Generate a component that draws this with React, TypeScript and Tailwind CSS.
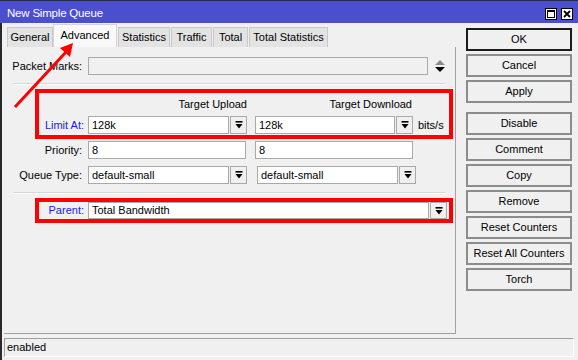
import React from "react";

const DropIcon = () => (
  <svg width="8" height="8" viewBox="0 0 8 8">
    <rect x="0.5" y="0" width="7" height="1.6" fill="#000" />
    <polygon points="0.5,3 7.5,3 4,7.5" fill="#000" />
  </svg>
);

const DropBtn = ({ className = "" }: { className?: string }) => (
  <div className={`h-full w-[17px] border border-[#a9a9a9] bg-[#f0f0f0] flex items-center justify-center ${className}`}>
    <DropIcon />
  </div>
);

const Field = ({ value, className = "", disabled = false }: { value?: string; className?: string; disabled?: boolean }) => (
  <div
    className={`h-full border border-[#a9a9a9] flex items-center pl-[3px] leading-none ${disabled ? "bg-[#f0f0f0]" : "bg-white"} ${className}`}
  >
    {value}
  </div>
);

const Btn = ({ label, ok = false, className = "" }: { label: string; ok?: boolean; className?: string }) => (
  <div
    className={`h-[23px] w-[106px] flex items-center justify-center bg-[#f0f0f0] border-2 ${ok ? "border-[#1a1a1a]" : "border-[#8c8c8c]"} ${className}`}
  >
    {label}
  </div>
);

export default function App() {
  return (
    <div
      className="relative w-[578px] h-[360px] overflow-hidden bg-[#f0f0f0] text-[11px] text-black flex flex-col"
      style={{ fontFamily: '"Liberation Sans", Arial, sans-serif' }}
    >
      {/* Title bar */}
      <div className="h-[23px] shrink-0 bg-[#4b4fce] border-t border-[#2a2a55] flex items-start">
        <div className="pl-[7px] pt-[7px] text-white text-[11.5px] leading-none tracking-[-0.2px]">New Simple Queue</div>
        <div className="ml-auto mr-[5px] mt-[7px] flex gap-[4px]">
          <div className="w-[12px] h-[12px] bg-white border border-black flex items-center justify-center">
            <div className="w-[8px] h-[8px] border border-black border-t-2" />
          </div>
          <div className="w-[12px] h-[12px] bg-white border border-black flex items-center justify-center">
            <svg width="8" height="8" viewBox="0 0 8 8">
              <path d="M1 1 L7 7 M7 1 L1 7" stroke="#000" strokeWidth="1.8" />
            </svg>
          </div>
        </div>
      </div>

      {/* Body */}
      <div className="flex-1 flex flex-col border-l-2 border-[#2a2a2a]">
        <div className="flex">
          {/* Left: tabs + panel */}
          <div className="ml-[2px] w-[452px] flex flex-col">
            <div className="h-[24px] flex items-end">
              <div className="ml-[3px] w-[46px] h-[20px] bg-[#e3e3e3] border border-[#c8c8c8] border-b-0 flex items-center justify-center">General</div>
              <div className="w-[64px] h-[23px] bg-[#f9f9f9] border border-[#d4d4d4] border-b-0 flex items-center justify-center pb-[2px]">Advanced</div>
              <div className="ml-[1px] w-[52px] h-[20px] bg-[#e3e3e3] border border-[#c8c8c8] border-b-0 flex items-center justify-center">Statistics</div>
              <div className="ml-[1px] w-[41px] h-[20px] bg-[#e3e3e3] border border-[#c8c8c8] border-b-0 flex items-center justify-center">Traffic</div>
              <div className="ml-[1px] w-[35px] h-[20px] bg-[#e3e3e3] border border-[#c8c8c8] border-b-0 flex items-center justify-center">Total</div>
              <div className="ml-[1px] w-[79px] h-[20px] bg-[#e3e3e3] border border-[#c8c8c8] border-b-0 flex items-center justify-center">Total Statistics</div>
            </div>

            {/* Panel */}
            <div className="h-[287px] border-r border-b border-[#a0a0a0] flex flex-col">
              {/* Packet Marks */}
              <div className="mt-[10px] h-[18px] flex items-center">
                <div className="w-[80px] text-right pr-[2px]">Packet Marks:</div>
                <Field disabled className="ml-[4px] w-[340px]" />
                <svg className="ml-[7px]" width="10" height="14" viewBox="0 0 10 14">
                  <polygon points="0,6 10,6 5,1" fill="#8a8a8a" />
                  <polygon points="0,8 10,8 5,13" fill="#000" />
                </svg>
              </div>

              <div className="mt-[8px] ml-[9px] w-[432px] h-[2px] border-t border-[#d6d6d6] border-b border-b-white" />

              {/* Red box 1 */}
              <div className="mt-[4px] ml-[31px] w-[418px] h-[50px] border-4 border-[#ff0000] flex flex-col">
                <div className="h-[23px] flex items-center">
                  <div className="w-[49px]" />
                  <div className="w-[159px] text-right">Target Upload</div>
                  <div className="ml-[8px] w-[157px] text-right">Target Download</div>
                </div>
                <div className="h-[18px] flex items-center">
                  <div className="w-[45px] text-right text-[#1a1ae6]">Limit At:</div>
                  <Field value="128k" className="ml-[4px] w-[141px]" />
                  <DropBtn className="ml-[1px]" />
                  <Field value="128k" className="ml-[8px] w-[140px]" />
                  <DropBtn className="ml-[1px]" />
                  <div className="ml-[5px]">bits/s</div>
                </div>
              </div>

              {/* Priority */}
              <div className="mt-[2px] h-[18px] flex items-center">
                <div className="w-[80px] text-right pr-[2px]">Priority:</div>
                <Field value="8" className="ml-[4px] w-[158px]" />
                <Field value="8" className="ml-[9px] w-[158px]" />
              </div>

              {/* Queue Type */}
              <div className="mt-[7px] h-[18px] flex items-center">
                <div className="w-[80px] text-right pr-[2px]">Queue Type:</div>
                <Field value="default-small" className="ml-[4px] w-[141px]" />
                <DropBtn className="ml-[1px]" />
                <Field value="default-small" className="ml-[10px] w-[141px]" />
                <DropBtn className="ml-[1px]" />
              </div>

              <div className="mt-[8px] ml-[9px] w-[432px] h-[2px] border-t border-[#d6d6d6] border-b border-b-white" />

              {/* Red box 2 */}
              <div className="mt-[4px] ml-[31px] w-[418px] h-[25px] border-4 border-[#ff0000] flex items-center">
                <div className="w-[45px] text-right text-[#1a1ae6]">Parent:</div>
                <Field value="Total Bandwidth" className="ml-[4px] w-[341px]" />
                <DropBtn className="ml-[1px]" />
              </div>
            </div>
          </div>

          {/* Right buttons */}
          <div className="ml-[10px] mt-[5px] flex flex-col gap-[3px]">
            <Btn label="OK" ok />
            <Btn label="Cancel" />
            <Btn label="Apply" />
            <Btn label="Disable" className="mt-[6px]" />
            <Btn label="Comment" />
            <Btn label="Copy" />
            <Btn label="Remove" />
            <Btn label="Reset Counters" />
            <Btn label="Reset All Counters" />
            <Btn label="Torch" />
          </div>
        </div>

        {/* Status bar */}
        <div className="mt-[4px] ml-[2px] w-[570px] h-[19px] border border-[#a0a0a0] border-r-white border-b-white flex items-center pl-[2px]">
          enabled
        </div>
      </div>

      {/* Red annotation arrow */}
      <svg className="absolute left-0 top-0 pointer-events-none" width="578" height="360" viewBox="0 0 578 360">
        <line x1="15" y1="107" x2="66" y2="52" stroke="#ff0000" strokeWidth="3" />
        <polygon points="73,43 60,48 70,57" fill="#ff0000" />
      </svg>
    </div>
  );
}
